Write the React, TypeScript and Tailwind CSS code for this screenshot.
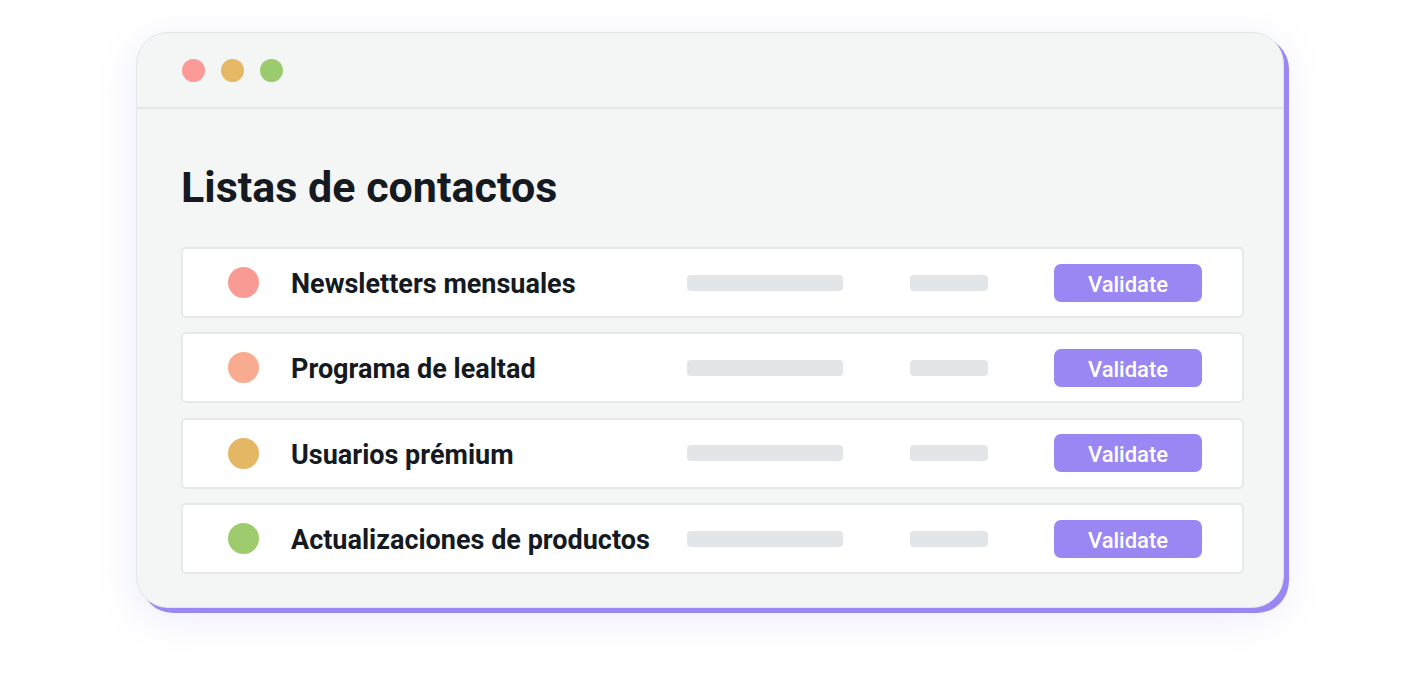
const rows = [
  { name: "Newsletters mensuales", color: "bg-[#f99b94]" },
  { name: "Programa de lealtad", color: "bg-[#f8ab8e]" },
  { name: "Usuarios prémium", color: "bg-[#e3b763]" },
  { name: "Actualizaciones de productos", color: "bg-[#9dcb6e]" },
];

function ContactRow({ name, color }: { name: string; color: string }) {
  return (
    <div className="flex h-[71px] items-center rounded-[5px] border-2 border-[#e6e8ea] bg-white">
      <span className={`ml-[45px] h-[31px] w-[31px] shrink-0 rounded-full ${color}`} />
      <span className="ml-[32px] w-[396px] shrink-0 pt-[3px] text-[27px] font-bold text-[#141a1f]">{name}</span>
      <span className="h-4 w-[156px] shrink-0 rounded bg-[#e3e6e9]" />
      <span className="ml-[67px] h-4 w-[78px] shrink-0 rounded bg-[#e3e6e9]" />
      <button className="ml-[66px] h-[38px] w-[148px] shrink-0 rounded-[7px] bg-[#9a87f3] pt-[3px] text-[22px] font-medium text-white">
        Validate
      </button>
    </div>
  );
}

export default function App() {
  return (
    <div className="h-[675px] w-[1424px] bg-white pl-[136px] pt-[32px] font-['Roboto',sans-serif]">
      <div className="h-[576px] w-[1148px] overflow-hidden rounded-[32px] border border-[#e3e5e7] bg-[#f4f5f5] shadow-[5px_5px_0_#9a87f3,0_10px_40px_rgba(130,110,240,0.14)]">
        <div className="flex h-[76px] items-center gap-[16px] border-b-2 border-[#e5e7e9] pl-[45px]">
          <span className="h-[23px] w-[23px] rounded-full bg-[#fb9a96]" />
          <span className="h-[23px] w-[23px] rounded-full bg-[#e4b865]" />
          <span className="h-[23px] w-[23px] rounded-full bg-[#9ccb6d]" />
        </div>
        <div className="pl-[44px] pr-[39px] pt-[52px]">
          <h1 className="text-[43px] font-bold leading-[52px] text-[#141a1f]">Listas de contactos</h1>
          <div className="mt-[34px] flex flex-col gap-[14.4px]">
            {rows.map((r) => (
              <ContactRow key={r.name} {...r} />
            ))}
          </div>
        </div>
      </div>
    </div>
  );
}
